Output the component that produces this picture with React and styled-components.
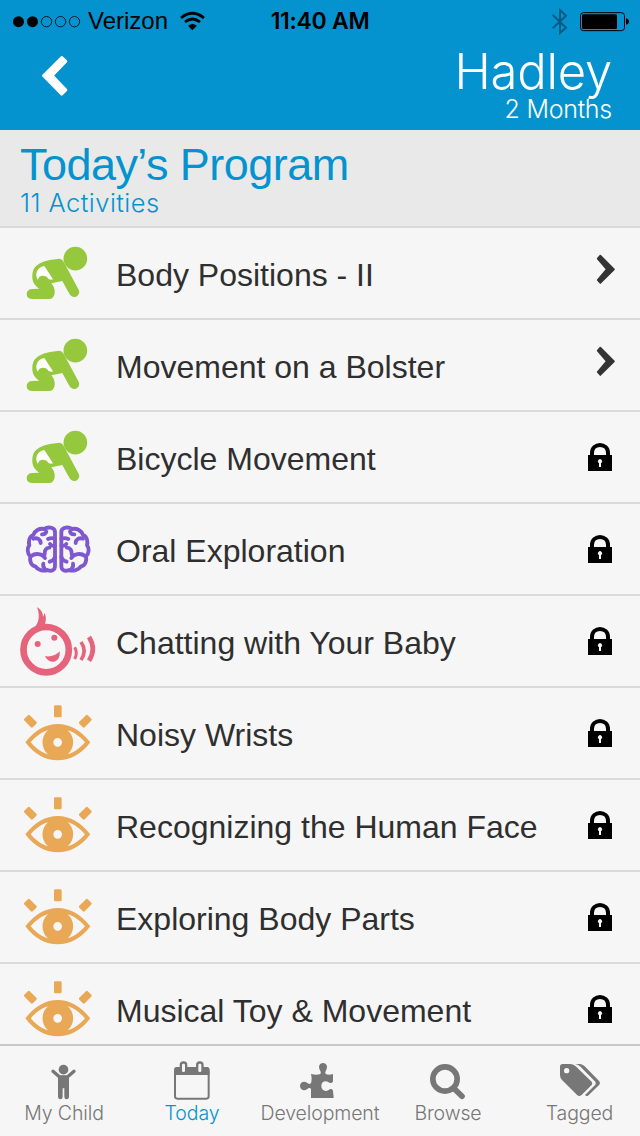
import React from "react";
import styled, { createGlobalStyle } from "styled-components";

const GlobalStyle = createGlobalStyle`
  * { box-sizing: border-box; }
  body { margin: 0; background: #f6f6f6; }
`;

const blue = "#0593cf";
const sans = `"Liberation Sans", Arial, sans-serif`;
const light = `Inter, "Liberation Sans", sans-serif`;

const Screen = styled.div`
  width: 640px;
  height: 1136px;
  display: flex;
  flex-direction: column;
  overflow: hidden;
  background: #f6f6f6;
  font-family: ${sans};
`;

const Icon = styled.svg`
  display: block;
  flex: none;
  width: ${(p) => p.$w}px;
  height: ${(p) => p.$h}px;
`;

const Header = styled.header`
  flex: none;
  height: 130px;
  background: ${blue};
`;

const StatusBar = styled.div`
  height: 40px;
  display: grid;
  grid-template-columns: 1fr auto 1fr;
  align-items: center;
  color: #000;
`;

const StatusGroup = styled.div`
  display: flex;
  align-items: center;
  height: 40px;
  justify-content: ${(p) => (p.$end ? "flex-end" : "flex-start")};
`;

const Carrier = styled.span`
  width: 92px;
  padding-left: 6px;
  padding-top: 1px;
  font-size: 24px;
  line-height: 40px;
  white-space: nowrap;
`;

const Clock = styled.span`
  font-family: ${light};
  font-weight: 600;
  font-size: 23px;
  line-height: 40px;
  letter-spacing: -0.3px;
  padding-top: 1px;
`;

const NavBar = styled.div`
  height: 90px;
  display: flex;
  justify-content: space-between;
  padding: 0 28px 0 36px;
`;

const BackButton = styled.button`
  border: 0;
  padding: 10px 0 0;
  background: none;
  align-self: flex-start;
`;

const Child = styled.div`
  display: flex;
  flex-direction: column;
  align-items: flex-end;
  color: #fff;
  font-family: ${light};
  font-weight: 300;
`;

const ChildName = styled.h1`
  margin: 0;
  padding-top: 6px;
  font-size: 49px;
  line-height: 52px;
  font-weight: 300;
  letter-spacing: -0.2px;
`;

const ChildAge = styled.div`
  font-size: 25px;
  line-height: 23px;
  letter-spacing: -0.25px;
`;

const Program = styled.section`
  flex: none;
  height: 98px;
  padding: 10px 20px 0;
  background: #e9e9e9;
  border-bottom: 2px solid #dadada;
  color: ${blue};
`;

const ProgramTitle = styled.h2`
  margin: 0;
  font-weight: 400;
  font-size: 45px;
  line-height: 50px;
  letter-spacing: -0.55px;
  white-space: nowrap;
`;

const ProgramCount = styled.div`
  font-family: ${light};
  font-weight: 300;
  font-size: 25.5px;
  line-height: 26px;
  letter-spacing: 0.45px;
`;

const List = styled.ul`
  flex: 1;
  min-height: 0;
  margin: 0;
  padding: 0;
  overflow: hidden;
  list-style: none;
`;

const Row = styled.li`
  height: 92px;
  display: flex;
  padding-left: 10px;
  border-bottom: 2px solid #dadada;
`;

const RowLabel = styled.span`
  flex: 1;
  padding-top: 2px;
  font-size: 32px;
  line-height: 90px;
  color: #2f2f2f;
  white-space: nowrap;
`;

const TabBar = styled.nav`
  flex: none;
  height: 92px;
  display: flex;
  border-top: 2px solid #c9c9c9;
  background: #f6f6f6;
`;

const Tab = styled.div`
  width: 128px;
  display: flex;
  flex-direction: column;
  align-items: center;
  color: ${(p) => (p.$active ? blue : "#777")};
`;

const TabLabel = styled.span`
  font-family: ${light};
  font-weight: 300;
  font-size: 19.5px;
  line-height: 26px;
  letter-spacing: -0.12px;
  padding-left: ${(p) => p.$shift || 0}px;
  white-space: nowrap;
`;

const Crawling = () => (
  <Icon $w={106} $h={90} viewBox="0 -21 318 270" fill="#96c83e">
    <circle cx="196" cy="71" r="35.500" />
    <path d="M148 71Q156 71 160 79L206 164C213 178 197 191 185 184Q180 181 177 175L157 138L124 145C138 160 136 182 128 188Q124 192 117 192H65C45 192 45 163 65 162L88 161C70 150 64 135 68 112C72 90 95 80 120 75Z" />
    <path fill="#fff" d="M103 93L129 133Q121 136 115 131C110 122 97 119 88 126Q85 129 83 134C74 119 80 97 103 93Z" />
  </Icon>
);

const BrainHalf = () => (
  <g>
    <path d="M135 65C134 50 112 50 103 57C88 54 74 62 70 75C57 79 55 96 58 106C51 114 51 130 61 139C58 152 63 167 76 169C84 182 104 184 112 180C126 186 135 179 135 168Z" />
    <path d="M70 86C82 82 91 88 92 99M96 73Q106 74 109 65M135 86Q124 82 114 87M135 107Q124 109 120 102M118 113C108 113 103 122 104 133M64 138C76 128 97 131 105 144M135 141Q132 151 119 155M100 161Q98 170 104 176" />
  </g>
);

const Brain = () => (
  <Icon $w={106} $h={90} viewBox="0 -18 318 270" fill="none" stroke="#7f57cf" strokeWidth="11.500" strokeLinecap="round" strokeLinejoin="round">
    <BrainHalf />
    <g transform="translate(289 0) scale(-1 1)">
      <BrainHalf />
    </g>
  </Icon>
);

const Talking = () => (
  <Icon $w={106} $h={90} viewBox="0 -12 318 270" fill="#e6647b">
    <circle cx="108.500" cy="149" r="68" fill="none" stroke="#e6647b" strokeWidth="20" />
    <circle cx="83" cy="132" r="9" />
    <circle cx="133" cy="113" r="9" />
    <path d="M105 168C120 172 140 165 149 154C151 173 142 185 130 185C118 186 110 178 105 168Z" />
    <path d="M81 21C93 28 99 38 99 50Q102 46 103 39C110 52 108 62 104 76L74 82C88 65 90 45 81 21Z" />
    <g fill="none" stroke="#e6647b">
      <path strokeWidth="9" d="M194 142Q204 160 194 177" />
      <path strokeWidth="11" d="M213 126Q232 153 213 180" />
      <path strokeWidth="14" d="M237 111Q260 147 237 182" />
    </g>
  </Icon>
);

const Eye = () => (
  <Icon $w={106} $h={90} viewBox="0 -21 318 270" fill="#e9a855">
    <rect x="132" y="31" width="23" height="36" rx="4" />
    <rect x="49.500" y="60.500" width="23" height="36" rx="4" transform="rotate(-45 61 78.500)" />
    <rect x="214.500" y="60.500" width="23" height="36" rx="4" transform="rotate(45 226 78.500)" />
    <path
      fillRule="evenodd"
      d="M46 142C75 105 108 87 143 87S212 105 241 142C212 180 178 196 143 196S75 180 46 142ZM62 142C76 159 95 173 114 178C92 160 92 124 114 106C95 111 76 126 62 142ZM225 142C211 159 192 173 173 178C195 160 195 124 173 106C192 111 211 126 225 142ZM130 142A13 13 0 1 0 156 142A13 13 0 1 0 130 142Z"
    />
  </Icon>
);

const Chevron = () => (
  <Icon $w={70} $h={90} viewBox="0 -36 210 270">
    <path fill="#333" stroke="#333" strokeWidth="5" strokeLinejoin="round" d="M91 47L132 88L91 129L83 120L110 88L83 56Z" />
  </Icon>
);

const Lock = () => (
  <Icon $w={70} $h={90} viewBox="0 516 210 270">
    <path fill="none" stroke="#000" strokeWidth="12" d="M66 648V639C66 607 114 607 114 639V648" />
    <path fillRule="evenodd" d="M54 645H126V693H54ZM87 681H93V669A6 6 0 1 0 87 669Z" />
  </Icon>
);

const tabIcons = {
  child: (
    <Icon $w={128} $h={54} viewBox="0 33 384 162" fill="#777">
      <circle cx="190.500" cy="104" r="14.500" />
      <path fill="none" stroke="#777" strokeWidth="10" strokeLinecap="round" d="M159 109L179 126H202L222 109" />
      <path d="M174 122H207V185A7 7 0 0 1 193 186V160H188V186A7 7 0 0 1 174 185Z" />
    </Icon>
  ),
  calendar: (
    <Icon $w={128} $h={54} viewBox="384 33 384 162" fill="#777">
      <rect x="525" y="99" width="101" height="92" rx="7" fill="none" stroke="#777" strokeWidth="6" />
      <path d="M523 120V105Q523 96 532 96H619Q628 96 628 105V120Z" />
      <rect x="539" y="79" width="23" height="38" rx="11" />
      <rect x="588" y="79" width="23" height="38" rx="11" />
      <rect x="546" y="86" width="9" height="25" rx="4" fill="#f6f6f6" />
      <rect x="595" y="86" width="9" height="25" rx="4" fill="#f6f6f6" />
    </Icon>
  ),
  puzzle: (
    <Icon $w={128} $h={54} viewBox="108 33 384 162" fill="#777">
      <path d="M273 117Q288 121 299 118C308 114 297 105 297 96C297 80 321 80 321 96C321 105 311 114 319 118Q328 121 339 117V139C337 147 329 144 325 141C314 135 304 141 304 153S315 172 326 165C331 161 337 161 339 167L341 189H273V163C271 156 265 159 261 163C252 169 240 164 240 153S252 137 261 143C265 147 271 149 274 142Q277 131 273 117Z" />
    </Icon>
  ),
  search: (
    <Icon $w={128} $h={54} viewBox="-108 33 384 162" fill="none" stroke="#777" strokeWidth="17">
      <circle cx="75" cy="132" r="36.500" />
      <path strokeLinecap="round" d="M103 161L126 184" />
    </Icon>
  ),
  tags: (
    <Icon $w={128} $h={54} viewBox="276 33 384 162" fill="#777">
      <path
        fillRule="evenodd"
        d="M420 95Q420 87 428 87H452Q461 88 467 94L515 140Q519 145 515 150L484 181Q478 185 472 181L426 135Q420 129 420 121ZM432 107A8 8 0 1 0 448 107A8 8 0 1 0 432 107Z"
      />
      <path d="M465 87H480Q488 88 494 94L538 139Q542 144 538 149L504 182Q499 185 495 180L526 149Q529 144 526 140L480 94Q474 88 465 87Z" />
    </Icon>
  ),
};

const activities = [
  ["Body Positions - II", Crawling, true],
  ["Movement on a Bolster", Crawling, true],
  ["Bicycle Movement", Crawling],
  ["Oral Exploration", Brain],
  ["Chatting with Your Baby", Talking],
  ["Noisy Wrists", Eye],
  ["Recognizing the Human Face", Eye],
  ["Exploring Body Parts", Eye],
  ["Musical Toy & Movement", Eye],
];

const tabs = [
  { label: "My Child", icon: "child" },
  { label: "Today", icon: "calendar", active: true },
  { label: "Development", icon: "puzzle" },
  { label: "Browse", icon: "search" },
  { label: "Tagged", icon: "tags", shift: 7 },
];

export default function App() {
  return (
    <Screen>
      <GlobalStyle />
      <Header>
        <StatusBar>
          <StatusGroup>
            <Icon $w={82} $h={40} viewBox="0 0 246 120">
              <circle cx="55.500" cy="62" r="16.500" />
              <circle cx="97.500" cy="62" r="16.500" />
              <g fill="none" stroke="#000" strokeWidth="2.500">
                <circle cx="139.500" cy="62" r="15.500" />
                <circle cx="181.500" cy="62" r="15.500" />
                <circle cx="223.500" cy="62" r="15.500" />
              </g>
            </Icon>
            <Carrier>Verizon</Carrier>
            <Icon $w={36} $h={40} viewBox="522 0 108 120">
              <g fill="none" stroke="#000" strokeWidth="8.500">
                <path d="M543 51Q577 23 612 51" />
                <path d="M555 63Q577 45 600 63" />
              </g>
              <path d="M564 74Q577 64 591 74L577 88Z" />
            </Icon>
          </StatusGroup>
          <Clock>11:40 AM</Clock>
          <StatusGroup $end>
            <Icon $w={100} $h={40} viewBox="660 0 300 120">
              <path fill="none" stroke="#045c83" strokeWidth="6" d="M698 41L738 80L720 96V27L738 44L698 82" />
              <rect x="781.500" y="35" width="132" height="54" rx="9" fill="none" stroke="#000" strokeWidth="3" />
              <rect x="786" y="40" width="105" height="44" rx="4" />
              <path d="M918 52Q927 54 927 61.500T918 71Z" />
            </Icon>
          </StatusGroup>
        </StatusBar>
        <NavBar>
          <BackButton aria-label="Back">
            <Icon $w={40} $h={50} viewBox="108 150 120 150">
              <path fill="#fff" stroke="#fff" strokeWidth="8" strokeLinejoin="round" d="M185 172L198 184L157 227L198 270L185 283L130 227Z" />
            </Icon>
          </BackButton>
          <Child>
            <ChildName>Hadley</ChildName>
            <ChildAge>2 Months</ChildAge>
          </Child>
        </NavBar>
      </Header>
      <Program>
        <ProgramTitle>Today’s Program</ProgramTitle>
        <ProgramCount>11 Activities</ProgramCount>
      </Program>
      <List>
        {activities.map(([label, Glyph, open]) => (
          <Row key={label}>
            <Glyph />
            <RowLabel>{label}</RowLabel>
            {open ? <Chevron /> : <Lock />}
          </Row>
        ))}
      </List>
      <TabBar>
        {tabs.map((t) => (
          <Tab key={t.label} $active={t.active}>
            {tabIcons[t.icon]}
            <TabLabel $shift={t.shift}>{t.label}</TabLabel>
          </Tab>
        ))}
      </TabBar>
    </Screen>
  );
}
